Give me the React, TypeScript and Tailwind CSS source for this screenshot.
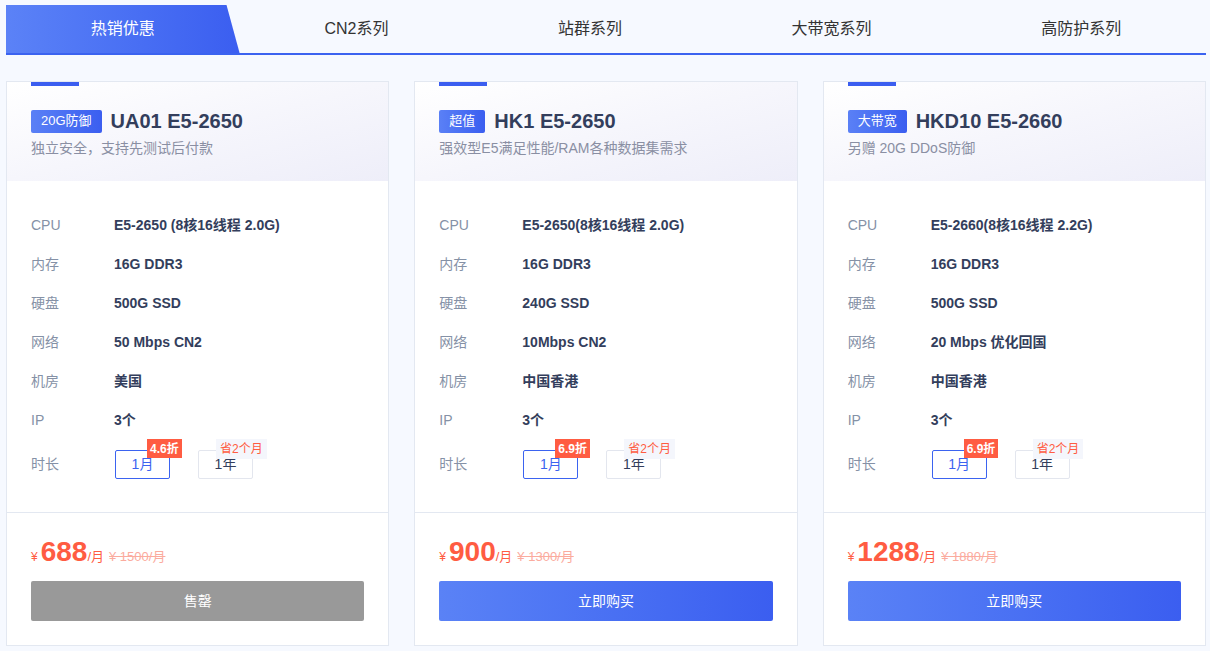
import React from 'react';

const tabs = ['热销优惠', 'CN2系列', '站群系列', '大带宽系列', '高防护系列'];

type Plan = {
  tag: string;
  name: string;
  desc: string;
  specs: [string, string][];
  off: string;
  price: string;
  old: string;
  soldOut?: boolean;
};

const plans: Plan[] = [
  {
    tag: '20G防御',
    name: 'UA01 E5-2650',
    desc: '独立安全，支持先测试后付款',
    specs: [
      ['CPU', 'E5-2650 (8核16线程 2.0G)'],
      ['内存', '16G DDR3'],
      ['硬盘', '500G SSD'],
      ['网络', '50 Mbps CN2'],
      ['机房', '美国'],
      ['IP', '3个'],
    ],
    off: '4.6折',
    price: '688',
    old: '¥ 1500/月',
    soldOut: true,
  },
  {
    tag: '超值',
    name: 'HK1 E5-2650',
    desc: '强效型E5满足性能/RAM各种数据集需求',
    specs: [
      ['CPU', 'E5-2650(8核16线程 2.0G)'],
      ['内存', '16G DDR3'],
      ['硬盘', '240G SSD'],
      ['网络', '10Mbps CN2'],
      ['机房', '中国香港'],
      ['IP', '3个'],
    ],
    off: '6.9折',
    price: '900',
    old: '¥ 1300/月',
  },
  {
    tag: '大带宽',
    name: 'HKD10 E5-2660',
    desc: '另赠 20G DDoS防御',
    specs: [
      ['CPU', 'E5-2660(8核16线程 2.2G)'],
      ['内存', '16G DDR3'],
      ['硬盘', '500G SSD'],
      ['网络', '20 Mbps 优化回国'],
      ['机房', '中国香港'],
      ['IP', '3个'],
    ],
    off: '6.9折',
    price: '1288',
    old: '¥ 1880/月',
  },
];

function PlanCard({ plan }: { plan: Plan }) {
  return (
    <div className="flex flex-col border border-[#e3e8f1] bg-white">
      {/* header */}
      <div className="h-[99px] bg-gradient-to-br from-white via-[#f6f6fc] to-[#eeeef9] px-[24px]">
        <div className="h-[4px] w-[48px] bg-[#3b5ef0]" />
        <div className="mt-[20px] flex items-center gap-[9px]">
          <span className="flex h-[23px] items-center whitespace-nowrap rounded-[2px] bg-gradient-to-r from-[#5a80f6] to-[#3b5ef0] px-[10px] text-[13px] text-white">
            {plan.tag}
          </span>
          <span className="text-[20px] font-bold text-[#333e5c]">{plan.name}</span>
        </div>
        <div className="mt-[2px] text-[14px] text-[#8a8fa3]">{plan.desc}</div>
      </div>

      {/* specs */}
      <div className="flex h-[331px] flex-col px-[24px] pt-[25px]">
        {plan.specs.map(([k, v]) => (
          <div key={k} className="flex h-[39px] items-center">
            <span className="w-[83px] text-[14px] text-[#8591a6]">{k}</span>
            <span className="text-[14px] font-bold text-[#333e5c]">{v}</span>
          </div>
        ))}
        <div className="mt-[10px] flex items-center">
          <span className="w-[84px] text-[14px] text-[#8591a6]">时长</span>
          <div className="relative flex h-[29px] w-[55px] items-center justify-center rounded-[2px] border border-[#3b63f0] text-[14px] text-[#3b63f0]">
            1月
            <span className="absolute left-[31px] top-[-12px] flex h-[19px] items-center whitespace-nowrap bg-[#ff5c42] px-[3px] text-[12px] font-bold text-white">
              {plan.off}
            </span>
          </div>
          <div className="relative ml-[28px] flex h-[29px] w-[55px] items-center justify-center rounded-[2px] border border-[#e3e6ee] text-[14px] text-[#333e5c]">
            1年
            <span className="absolute left-[17px] top-[-12px] flex h-[20px] items-center whitespace-nowrap bg-[#f4f6fc] px-[4px] text-[12px] text-[#ff5c42]">
              省2个月
            </span>
          </div>
        </div>
      </div>

      {/* price */}
      <div className="border-t border-[#e3e8f1] px-[24px] pb-[24px] pt-[21px]">
        <div className="flex items-baseline text-[#ff5c42]">
          <span className="mr-[3px] text-[12px]">¥</span>
          <span className="text-[28px] font-bold leading-[36px]">{plan.price}</span>
          <span className="text-[13px]">/月</span>
          <span className="ml-[5px] text-[13px] text-[#fbab9e] line-through">{plan.old}</span>
        </div>
        <button
          className={
            plan.soldOut
              ? 'mt-[11px] flex h-[40px] w-full items-center justify-center rounded-[2px] bg-[#999999] text-[14px] text-white'
              : 'mt-[11px] flex h-[40px] w-full items-center justify-center rounded-[2px] bg-gradient-to-r from-[#5a82f6] to-[#3b5ef0] text-[14px] text-white'
          }
        >
          {plan.soldOut ? '售罄' : '立即购买'}
        </button>
      </div>
    </div>
  );
}

export default function App() {
  return (
    <div
      className="min-h-[651px] w-[1210px] bg-[#f6f9ff] pl-[6px] pr-[4px] pt-[5px]"
      style={{ fontFamily: '"Liberation Sans", "Noto Sans CJK SC", sans-serif' }}
    >
      {/* tab bar */}
      <div className="flex h-[50px] border-b-2 border-[#3b63f0]">
        {tabs.map((t, i) => (
          <div
            key={t}
            className={
              i === 0
                ? 'flex flex-auto items-center justify-center bg-gradient-to-r from-[#5b82f7] to-[#3b5ef0] text-[16px] text-white [clip-path:polygon(0_0,94.4%_0,100%_100%,0_100%)]'
                : 'flex flex-auto items-center justify-center text-[16px] text-[#333333]'
            }
          >
            {t}
          </div>
        ))}
      </div>

      {/* cards */}
      <div className="mt-[26px] grid grid-cols-3 gap-[25px]">
        {plans.map((p) => (
          <PlanCard key={p.name} plan={p} />
        ))}
      </div>
    </div>
  );
}
